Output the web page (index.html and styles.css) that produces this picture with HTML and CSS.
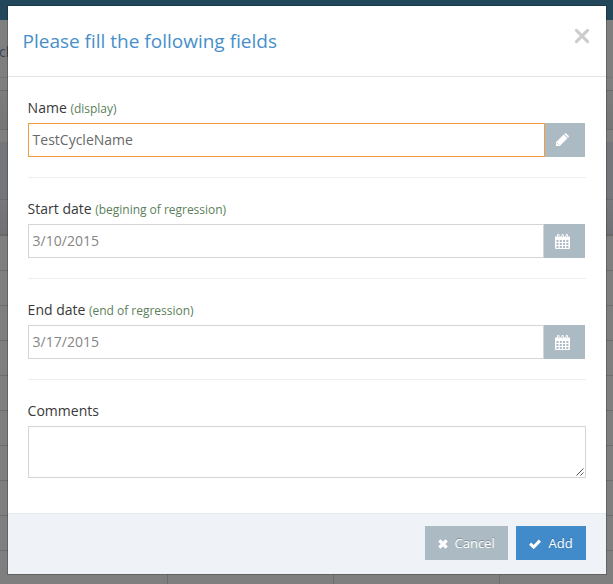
FILE: index.html
```
<!DOCTYPE html>
<html lang="en">
<head>
<meta charset="utf-8">
<title>Cycle</title>
<link rel="stylesheet" href="styles.css">
</head>
<body>
<div class="page">
  <div class="navbar"></div>
  <div class="heading">cl</div>
  <div class="panel-head"></div>
  <div class="panel-gap"></div>
  <div class="table-head"></div>
  <div class="filter-row"></div>
  <div class="table-rows"></div>
</div>
<div class="modal">
  <header class="modal-header">
    <h4 class="title">Please fill the following fields</h4>
    <svg class="close" width="16" height="16" viewBox="0 0 16 16"><path d="M2.400 2.400 13.600 13.600M13.600 2.400 2.400 13.600"/></svg>
  </header>
  <main class="modal-body">
    <div class="group">
      <label class="label">Name <small>(display)</small></label>
      <div class="input-group active">
        <div class="input">TestCycleName</div>
        <div class="addon">
          <svg width="14" height="14" viewBox="0 0 14 14"><path fill="#fff" d="M1 9.200 8.700 1.500l3.800 3.800L4.800 13H1zM9.300.9l.5-.5q.7-.6 1.400 0l2.400 2.400q.6.7 0 1.400l-.5.5z"/><path fill="#aab8c1" d="M2 9.800 4.200 12H3.100v-1.100H2z"/></svg>
        </div>
      </div>
    </div>
    <div class="group">
      <label class="label">Start date <small>(begining of regression)</small></label>
      <div class="input-group">
        <div class="input muted">3/10/2015</div>
        <div class="addon">
          <svg width="15" height="15" viewBox="0 0 15 15"><path fill="#fff" fill-rule="evenodd" d="M0 2.500h2V1q0-1 1.250-1T4.500 1v1.500h2V1q0-1 1.100-1T8.700 1v1.500h2V1q0-1 1.150-1T13 1v1.500h2V14q0 1-1 1H1q-1 0-1-1zM1.500 6v2h2V6zm3.300 0v2h2V6zm3.300 0v2h2V6zm3.300 0v2h2V6zM1.500 9v2h2V9zm3.300 0v2h2V9zm3.300 0v2h2V9zm3.300 0v2h2V9zM1.500 12v2h2v-2zm3.300 0v2h2v-2zm3.300 0v2h2v-2zm3.300 0v2h2v-2zM2.900 1v2.500h.6V1zm4.400 0v2.500h.6V1zm4.300 0v2.500h.6V1z"/></svg>
        </div>
      </div>
    </div>
    <div class="group">
      <label class="label">End date <small>(end of regression)</small></label>
      <div class="input-group">
        <div class="input muted">3/17/2015</div>
        <div class="addon">
          <svg width="15" height="15" viewBox="0 0 15 15"><path fill="#fff" fill-rule="evenodd" d="M0 2.500h2V1q0-1 1.250-1T4.500 1v1.500h2V1q0-1 1.100-1T8.700 1v1.500h2V1q0-1 1.150-1T13 1v1.500h2V14q0 1-1 1H1q-1 0-1-1zM1.500 6v2h2V6zm3.300 0v2h2V6zm3.300 0v2h2V6zm3.300 0v2h2V6zM1.500 9v2h2V9zm3.300 0v2h2V9zm3.300 0v2h2V9zm3.300 0v2h2V9zM1.500 12v2h2v-2zm3.300 0v2h2v-2zm3.300 0v2h2v-2zm3.300 0v2h2v-2zM2.900 1v2.500h.6V1zm4.400 0v2.500h.6V1zm4.300 0v2.500h.6V1z"/></svg>
        </div>
      </div>
    </div>
    <div class="group">
      <label class="label">Comments</label>
      <div class="textarea">
        <svg width="8" height="8" viewBox="0 0 8 8"><path d="M.5 7.500l7-7M4.500 7.500l3-3"/></svg>
      </div>
    </div>
  </main>
  <footer class="modal-footer">
    <div class="btn cancel"><svg width="10" height="10" viewBox="0 0 10 10"><path stroke-width="3.400" d="M1.400 1.400l7.200 7.200M8.600 1.400 1.400 8.600"/></svg>Cancel</div>
    <div class="btn add"><svg width="12" height="10" viewBox="0 0 12 10"><path stroke-width="3" d="M1.100 4.600 4.700 8.100 10.900 1.600"/></svg>Add</div>
  </footer>
</div>
</body>
</html>
```
FILE: styles.css
```
* { box-sizing: border-box; }
body {
  margin: 0;
  width: 613px;
  height: 584px;
  overflow: hidden;
  position: relative;
  background: #7f7f7f;
  font-family: "Open Sans", sans-serif;
  font-size: 14px;
  color: #393939;
}
svg { display: block; flex: none; }
.page { display: flex; flex-direction: column; height: 584px; }
.page > div { flex: none; }
.navbar { height: 20px; background: #22475b; }
.heading {
  height: 70px;
  padding-top: 22px;
  line-height: 20px;
  color: #394557;
  background: repeating-linear-gradient(90deg, #6c6c6c 0 1px, #7b7b7b 1px 2px) 0 57px / 100% 1px no-repeat;
  margin-left: -1px;
}
.panel-head { height: 40px; border-top: 1px solid #6b6b6b; border-bottom: 1px solid #6d6d6d; background: linear-gradient(#7c7c7c, #767676); }
.panel-gap { height: 12px; }
.table-head { height: 70px; height: 58px; background: #75767c; border-bottom: 1px solid #6a6b70; }
.filter-row { height: 36px; background: linear-gradient(#77787b, #707176); border-bottom: 2px solid #686868; }
.table-rows {
  flex: 1 0 auto !important;
  background:
    repeating-linear-gradient(90deg, transparent 0 165px, #6e6e6e 165px 166px) 2px 0,
    repeating-linear-gradient(transparent 0 34px, #6e6e6e 34px 35px);
}
.modal {
  position: absolute;
  left: 8px;
  top: 6px;
  width: 598px;
  height: 568px;
  display: flex;
  flex-direction: column;
  background: #fff;
  box-shadow: 0 0 0 1px rgba(0, 0, 0, .22);
}
.modal-header {
  height: 71px;
  padding: 0 16px 0 14.500px;
  display: flex;
  justify-content: space-between;
  border-bottom: 1px solid #e5e5e5;
}
.title { margin: 22px 0 0; font-size: 19px; line-height: 27px; font-weight: 400; color: #478fca; }
.close { margin-top: 22px; fill: none; stroke: #ccc; stroke-width: 3; stroke-linecap: round; }
.modal-body { flex: 1; padding: 20px 20px 0; }
.group + .group { margin-top: 20px; padding-top: 20px; border-top: 1px solid #eee; }
.label { display: block; height: 26px; line-height: 21px; margin-left: -.4px; }
.label small { font-size: 12px; letter-spacing: -.02px; color: #5a7f5a; }
.input-group { display: flex; height: 34px; margin-right: 1px; }
.input {
  flex: 1;
  padding-left: 3.600px;
  line-height: 32px;
  border: 1px solid #d5d5d5;
  color: #696969;
}
.muted { color: #858585; }
.active .input { border-color: #f59942; }
.addon {
  width: 41px;
  padding-right: 4px;
  display: flex;
  align-items: center;
  justify-content: center;
  background: #abbac3;
}
.active .addon { width: 40px; padding-right: 6px; }
.textarea {
  height: 52px;
  padding: 1px;
  display: flex;
  align-items: flex-end;
  justify-content: flex-end;
  border: 1px solid #d5d5d5;
}
.textarea svg { stroke: #555; }
.modal-footer {
  height: 61px;
  padding: 12px 20px 0;
  display: flex;
  justify-content: flex-end;
  gap: 8px;
  background: #eff3f8;
  border-top: 1px solid #e4e9ee;
}
.btn {
  height: 34px;
  display: flex;
  align-items: center;
  padding: 0 13px;
  font-size: 13px;
  color: #fff;
  text-shadow: 0 -1px 0 rgba(0, 0, 0, .25);
}
.btn svg { fill: none; stroke: #fff; margin-top: 2px; }
.cancel { width: 83px; background: #abbac3; gap: 6.500px; }
.add { width: 70px; background: #428bca; gap: 7.500px; }
```
